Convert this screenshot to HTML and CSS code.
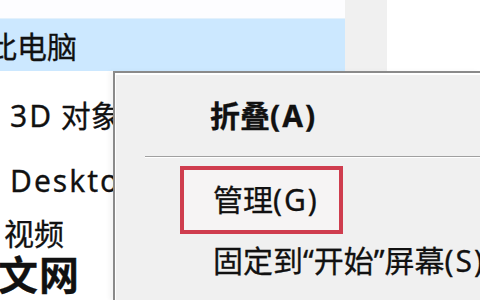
FILE: index.html
```html
<!DOCTYPE html>
<html lang="zh-CN">
<head>
<meta charset="utf-8">
<link rel="stylesheet" href="styles.css">
</head>
<body>
<div class="explorer">
  <div class="top">
    <div class="pane">
      <div class="strip"></div>
      <div class="selected"><span class="sel-text">此电脑</span></div>
    </div>
    <div class="gutter"></div>
    <div class="blank"></div>
  </div>
  <div class="nav">
    <div class="nav-item"><span class="lat">3D</span>&nbsp;对象</div>
    <div class="nav-item"><span class="lat">Desktop</span></div>
    <div class="nav-item video">视频</div>
  </div>
  <div class="watermark">文网</div>
  <div class="menu">
    <div class="menu-item bold">折叠<span class="lat">(A)</span></div>
    <div class="separator"></div>
    <div class="menu-item boxed">管理<span class="lat">(G)</span></div>
    <div class="menu-item last">固定到“开始”屏幕<span class="lat">(S)</span></div>
  </div>
</div>
</body>
</html>
```
FILE: styles.css
```css
* { box-sizing: border-box; }
html, body { margin: 0; padding: 0; }
body {
  width: 480px;
  height: 300px;
  overflow: hidden;
  background: #fff;
  font-family: "Noto Sans", "Noto Sans CJK SC", sans-serif;
  font-size: 30px;
  color: #111;
  -webkit-text-stroke: 0.3px #111;
}
.explorer {
  position: relative;
  width: 480px;
  height: 300px;
  overflow: hidden;
  background: #fff;
}
.top {
  display: flex;
  height: 71px;
}
.pane {
  width: 345px;
  display: flex;
  flex-direction: column;
}
.strip {
  height: 18px;
  background: #fdfdff;
}
.selected {
  flex: 1;
  background: #cce8ff;
  border-top: 1px solid #e3f1fc;
  display: flex;
  align-items: center;
  overflow: hidden;
  white-space: nowrap;
}
.sel-text {
  margin-left: -13px;
}
.gutter {
  width: 42px;
  background: #f0f0f0;
}
.blank {
  flex: 1;
  background: #fff;
}
.nav {
  display: grid;
  grid-template-rows: 64px 66px 40px;
  padding-top: 13px;
  width: 113px;
}
.nav-item {
  display: flex;
  align-items: center;
  padding-left: 10px;
  white-space: nowrap;
  line-height: 1;
}
.nav-item.video {
  padding-left: 4px;
}
.lat {
  letter-spacing: 2px;
}
.watermark {
  position: absolute;
  left: -2px;
  top: 255px;
  font-size: 40px;
  font-weight: 700;
  color: #111;
  line-height: 1;
  letter-spacing: 1px;
}
.menu {
  position: absolute;
  left: 113px;
  top: 71px;
  right: 0;
  bottom: 0;
  background: #f0f0f0;
  border-top: 2px solid #8a8a8a;
  border-left: 2px solid #8a8a8a;
  box-shadow: inset 1px 2px 0 #ffffff, -4px 0 4px rgba(0,0,0,0.04);
  padding-top: 11px;
  display: flex;
  flex-direction: column;
}
.menu-item {
  display: flex;
  align-items: center;
  white-space: nowrap;
  line-height: 1;
}
.menu-item.bold {
  height: 64px;
  padding-left: 95px;
  font-weight: 700;
}
.separator {
  height: 18px;
  margin-left: 30px;
  padding-top: 8px;
}
.separator::before {
  content: "";
  display: block;
  border-top: 1px solid #a0a0a0;
  border-bottom: 1px solid #ffffff;
}
.menu-item.boxed {
  margin-left: 65px;
  width: 163px;
  height: 68px;
  border: 4px solid #cf3d4e;
  padding-left: 29px;
  background: #f6f4f4;
}
.menu-item.last {
  height: 54px;
  padding-left: 98px;
}
```
